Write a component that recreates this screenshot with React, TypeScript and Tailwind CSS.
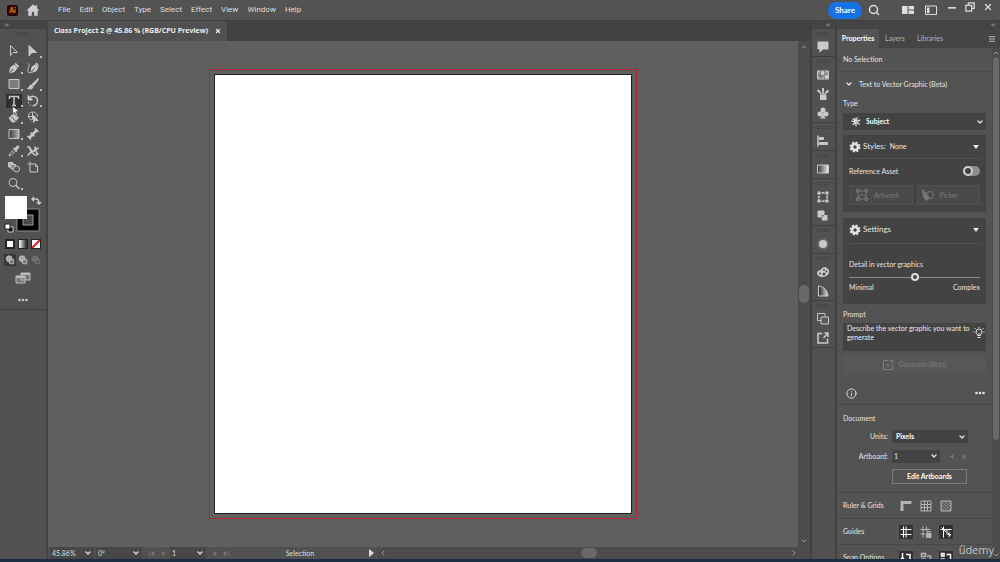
import React from "react";
import clsx from "clsx";
import {
  ChevronDown,
  ChevronLeft,
  ChevronRight,
  ChevronUp,
  Info,
  Menu,
  Search,
  X,
} from "lucide-react";

type IconProps = { children: React.ReactNode; size?: string };

const Icon: React.FC<IconProps> = ({ children, size = "size-3" }) => (
  <svg
    viewBox="0 0 24 24"
    className={clsx("shrink-0", size)}
    fill="none"
    stroke="currentColor"
    strokeWidth={2}
    aria-hidden="true"
  >
    {children}
  </svg>
);

const menus = [
  "File",
  "Edit",
  "Object",
  "Type",
  "Select",
  "Effect",
  "View",
  "Window",
  "Help",
];

const tools = [
  {
    name: "Selection",
    icon: <path d="M5 1v20l5-6h9L5 1Z" />,
  },
  {
    name: "Direct Selection",
    more: true,
    icon: <path d="M4 1v21l6-7h9L4 1Z" fill="currentColor" />,
  },
  {
    name: "Pen",
    more: true,
    icon: (
      <>
        <path d="M3 22 5 11l7-5 6 6-5 7-10 3Z" fill="currentColor" />
        <path d="m14 3 7 7" strokeWidth={4} />
        <path d="m3 22 7-8" stroke="#535353" />
      </>
    ),
  },
  {
    name: "Curvature",
    icon: (
      <>
        <path d="m8 21 2-11 7-5 5 6-4 7-10 3Z" fill="currentColor" />
        <path d="m18 2 5 6" strokeWidth={3} />
        <path d="m8 21 7-8" stroke="#535353" />
        <path d="M2 3c5 2 1 7 0 11s0 9 6 7" />
      </>
    ),
  },
  {
    name: "Rectangle",
    more: true,
    icon: <path d="M2 3h20v18H2z" fill="#7c7c7c" />,
  },
  {
    name: "Paintbrush",
    more: true,
    icon: (
      <>
        <path d="M22 1 10 13l3 3L23 3Z" fill="currentColor" />
        <path d="M8 14c-4 0-2 5-7 7 6 2 11 1 11-4Z" fill="currentColor" />
      </>
    ),
  },
  {
    name: "Type",
    more: true,
    active: true,
    icon: <path d="M3 8V3h18v5M12 3v18M8 21h8" strokeWidth={3} />,
  },
  {
    name: "Rotate",
    more: true,
    icon: (
      <>
        <path d="M5 6a9 9 0 0 1 16 6c0 6-5 10-10 9" strokeWidth={3} />
        <path d="M2 1v9h9Z" fill="currentColor" />
        <path d="M3 14v3M6 20l2 1" />
      </>
    ),
  },
  {
    name: "Eraser",
    more: true,
    icon: (
      <>
        <path d="m2 14 10-9 9 9-8 8H8Z" fill="currentColor" />
        <path d="m6 11 9 9" stroke="#535353" />
        <path d="M17 3v8" strokeWidth={3} />
      </>
    ),
  },
  {
    name: "Shape Builder",
    icon: (
      <>
        <path d="M10 18A8 8 0 0 1 3 8c2-6 9-8 14-4 3 2 4 5 4 8M3 11h14M11 3v14" />
        <path d="M13 9v14l3-4h6Z" fill="currentColor" />
      </>
    ),
  },
  {
    name: "Gradient",
    more: true,
    icon: <path d="M2 3h20v18H2z" fill="url(#toolGradient)" />,
  },
  {
    name: "Width",
    icon: (
      <>
        <path d="m4 20 16-16" strokeWidth={5} />
        <path d="m1 16 7 7M7 9l8 8M16 1l7 7" strokeWidth={3} />
      </>
    ),
  },
  {
    name: "Eyedropper",
    more: true,
    icon: (
      <>
        <path d="m13 8 4-5c4-3 6 0 4 3l-5 5Z" fill="currentColor" />
        <path d="m11 6 7 7" strokeWidth={3} />
        <path d="m12 9-8 8-2 5 5-2 8-8" />
      </>
    ),
  },
  {
    name: "Puppet Warp",
    icon: (
      <>
        <path d="M1 4c4-1 5 1 6 5s6 5 8 2 4-5 8-4" strokeWidth={4} />
        <path
          d="M1 21c4-1 3-6 7-6s5 5 9 5 3-3 6-3M7 9l2 6M17 3l-2 8M18 11l2 8"
          strokeWidth={3}
        />
      </>
    ),
  },
  {
    name: "Blend",
    icon: (
      <>
        <path d="M1 3h9v9H1z" fill="#b4b4b4" />
        <path d="M6 7h9v9H6z" fill="#858585" />
        <circle cx="17" cy="16" r="6" fill="#535353" />
      </>
    ),
  },
  {
    name: "Artboard",
    icon: <path d="M6 1v4M1 6h4M6 6h11l4 4v12H6V6ZM17 6v5h4" />,
  },
  {
    name: "Zoom",
    more: true,
    icon: (
      <>
        <circle cx="10" cy="9" r="8" />
        <path d="m16 15 7 7" strokeWidth={3} />
      </>
    ),
  },
];

const dockGroups = [
  [
    {
      name: "Comments",
      icon: <path d="M2 2h20v14H12l-6 6v-6H2Z" fill="currentColor" />,
    },
  ],
  [
    {
      name: "Swatches",
      icon: (
        <>
          <path d="M1 4h22v16H1z" fill="#9b9b9b" />
          <path d="M2 12h20M8 4v16M15 4v16" stroke="#666" />
          <path d="M9 6h5v5H9zM16 13h5v5h-5z" fill="currentColor" />
        </>
      ),
    },
    {
      name: "Brushes",
      icon: (
        <>
          <path d="M7 14h11v9H7z" fill="currentColor" />
          <path d="m9 13-5-6M12 13V3M15 13l5-6" strokeWidth={3} />
          <path d="m1 4 5 4M12 0v7M18 9l5-4" strokeWidth={4} />
        </>
      ),
    },
    {
      name: "Symbols",
      icon: (
        <g fill="currentColor" stroke="none">
          <circle cx="12" cy="6" r="5" />
          <circle cx="6" cy="14" r="5" />
          <circle cx="18" cy="14" r="5" />
          <path d="M11 10h2l1 8 4 5H6l4-5Z" />
        </g>
      ),
    },
  ],
  [
    {
      name: "Align",
      icon: (
        <>
          <path d="M2 1v22" strokeWidth={3} />
          <path d="M5 5h8v4H5zM5 15h16v4H5z" fill="currentColor" />
        </>
      ),
    },
  ],
  [
    {
      name: "Gradient",
      icon: <path d="M1 4h22v16H1z" fill="url(#panelGradient)" />,
    },
  ],
  [
    {
      name: "Transform",
      icon: (
        <>
          <path d="M4 4h16v16H4z" strokeDasharray="3 2" />
          <path
            d="M1 1h6v6H1zM17 1h6v6h-6zM1 17h6v6H1zM17 17h6v6h-6zM10 2h4v3h-4zM10 19h4v3h-4zM2 10h3v4H2zM19 10h3v4h-3z"
            fill="currentColor"
            stroke="none"
          />
        </>
      ),
    },
    {
      name: "Pathfinder",
      icon: (
        <>
          <path d="M2 2h12v12H2z" fill="currentColor" />
          <path d="M9 9h13v13H9z" fill="currentColor" stroke="#535353" />
          <path d="M9 9h5v5H9z" fill="#535353" />
        </>
      ),
    },
  ],
  [
    {
      name: "Appearance",
      icon: (
        <>
          <circle cx="12" cy="12" r="8" fill="currentColor" stroke="none" />
          <circle cx="12" cy="12" r="10" strokeDasharray="2 2" opacity={0.6} />
        </>
      ),
    },
  ],
  [
    {
      name: "Color",
      icon: (
        <>
          <path
            d="M1 13c1-5 8-3 9-7s12-4 13 4c1 8-6 11-13 11-5 0-10-3-9-8Z"
            fill="currentColor"
          />
          <g fill="#4a4a4a" stroke="none">
            <circle cx="14" cy="8" r="2" />
            <circle cx="19" cy="11" r="2" />
            <circle cx="6" cy="15" r="2" />
            <circle cx="14" cy="16" r="3" />
          </g>
        </>
      ),
    },
    {
      name: "Color Guide",
      icon: <path d="M3 22V2c11 1 18 9 19 20Z" fill="url(#guideGradient)" />,
    },
  ],
  [
    {
      name: "Artboards",
      icon: (
        <>
          <path d="M8 15H1V1h15v6" />
          <path d="M8 8h15v14H8z" fill="#5c5c5c" />
        </>
      ),
    },
    {
      name: "Asset Export",
      icon: (
        <path d="M11 3H2v19h19v-9M13 12l9-10M15 2h7v8" strokeWidth={3} />
      ),
    },
  ],
];

const rulerIcons = [
  { name: "Rulers", icon: <path d="M4 22V5h19" strokeWidth={6} /> },
  {
    name: "Grid",
    icon: <path d="M2 2h20v20H2zM2 9h20M2 15h20M9 2v20M15 2v20" />,
  },
  {
    name: "Transparency grid",
    icon: (
      <>
        <path d="M2 2h20v20H2z" />
        <path
          d="m2 8 6-6M2 15 15 2M2 22 22 2M9 22 22 9M16 22l6-6M2 16l6 6M2 9l13 13M2 2l20 20M9 2l13 13M16 2l6 6"
          strokeWidth={1}
        />
      </>
    ),
  },
];

const guideIcons = [
  {
    name: "Show guides",
    active: true,
    icon: <path d="M7 1v22M1 7h22M1 17h22M12 1v22" />,
  },
  {
    name: "Lock guides",
    icon: (
      <>
        <path d="M6 1v22M13 1v10M1 7h20M1 16h10" />
        <path d="M13 15h9v8h-9z" fill="currentColor" />
        <path d="M15 15v-4h5v4" />
      </>
    ),
  },
  {
    name: "Smart guides",
    active: true,
    icon: (
      <>
        <path d="M7 1v22M1 7h22M14 7v9M3 3l9 9" />
        <path d="m19 11-5 7h4l-1 6 6-8h-4Z" fill="currentColor" stroke="none" />
      </>
    ),
  },
];

const snapIcons = [
  {
    name: "Snap to point",
    active: true,
    icon: <path d="M5 2v20M2 12l3 3 3-3M12 5h8v17" strokeWidth={3} />,
  },
  {
    name: "Snap to pixel",
    icon: <path d="M3 3h8v6H3zM3 14h8M14 8h7v14" strokeWidth={3} />,
  },
  {
    name: "Snap to glyph",
    active: true,
    icon: <path d="M3 3h5v5H3zM3 14h5v5H3zM13 5h8v12h-8" strokeWidth={3} />,
  },
];

const Gradients = () => (
  <svg className="absolute size-0" aria-hidden="true">
    <defs>
      <linearGradient id="toolGradient">
        <stop offset="0" stopColor="#3a3a3a" />
        <stop offset="1" stopColor="#b4b4b4" />
      </linearGradient>
      <linearGradient id="panelGradient">
        <stop offset="0" stopColor="#333" />
        <stop offset="1" stopColor="#eee" />
      </linearGradient>
      <linearGradient id="guideGradient">
        <stop offset="0" stopColor="#222" />
        <stop offset="1" stopColor="#ddd" />
      </linearGradient>
    </defs>
  </svg>
);

const Collapse: React.FC<{ back?: boolean }> = ({ back }) => (
  <svg viewBox="0 0 8 6" className="w-1.5 h-1" fill="none" stroke="#c4c4c4">
    <path d={back ? "M4 1 2 3l2 2M7 1 5 3l2 2" : "m1 1 2 2-2 2M4 1l2 2-2 2"} />
  </svg>
);

const Grip = () => (
  <div className="w-3 h-[3px] border-y border-dotted border-[#3c3c3c]" />
);

const Dots = () => (
  <svg viewBox="0 0 12 4" className="w-3 h-1" fill="currentColor">
    <circle cx="2.5" cy="2" r="1.3" />
    <circle cx="6" cy="2" r="1.3" />
    <circle cx="9.5" cy="2" r="1.3" />
  </svg>
);

const GearIcon = () => (
  <Icon>
    <circle cx="12" cy="12" r="6" strokeWidth={5} />
    <circle cx="12" cy="12" r="9" strokeWidth={4} strokeDasharray="4 3.07" />
  </Icon>
);

const TopBar = () => (
  <header className="flex items-center h-[21px] shrink-0 border-b border-[#414141] bg-[#535353] text-[#dedede]">
    <div className="flex items-center gap-2 w-12 pl-[7px]">
      <span className="flex items-center justify-center size-[11px] rounded-xs bg-[#2d0500] font-bold text-[7px] text-[#ff7c1a]">
        Ai
      </span>
      <button aria-label="Home" className="text-[#d0d0d0]">
        <svg viewBox="0 0 24 24" className="size-[14px]" fill="currentColor">
          <path d="M12 2 1 13h3v9h6v-7h4v7h6v-9h3l-4-4V4h-3v2Z" />
        </svg>
      </button>
    </div>
    <nav className="flex items-center gap-[9px] pl-[10px] font-['Roboto',sans-serif] text-[8px]">
      {menus.map((item) => (
        <button key={item}>{item}</button>
      ))}
    </nav>
    <div className="flex items-center ml-auto pr-[7px]">
      <button className="h-[17px] px-[7px] mr-1.5 rounded-full bg-[#1473e6] font-bold text-[8px] text-white">
        Share
      </button>
      <button aria-label="Search" className="mr-[22px]">
        <Search className="size-3" strokeWidth={3} />
      </button>
      <button aria-label="Arrange documents" className="mr-[11px]">
        <Icon>
          <path
            d="M0 4h11v16H0zM13 4h11v7H13zM13 13h11v7H13z"
            fill="currentColor"
            stroke="none"
          />
        </Icon>
      </button>
      <button aria-label="Switch workspace" className="mr-[10px]">
        <Icon>
          <path d="M1 4h22v17H1z" />
          <path d="M4 7h5v11H4z" fill="currentColor" stroke="none" />
        </Icon>
      </button>
      <div className="flex items-center gap-2 pb-1.5">
        <button aria-label="Minimize">
          <Icon size="size-[10px]">
            <path d="M3 14h18" strokeWidth={4} />
          </Icon>
        </button>
        <button aria-label="Restore">
          <Icon size="size-[10px]">
            <path d="M8 8V2h14v13h-6M2 8h14v14H2z" strokeWidth={3} />
          </Icon>
        </button>
        <button aria-label="Close">
          <X className="size-[10px]" strokeWidth={3} />
        </button>
      </div>
    </div>
  </header>
);

const Toolbar = () => (
  <aside className="flex flex-col w-12 shrink-0 border-r-2 border-[#434343] bg-[#515151] text-[#c8c8c8]">
    <div className="flex items-center h-2 pl-1 bg-[#444]">
      <Collapse />
    </div>
    <div className="flex flex-col border-b border-[#404040] pb-[7px]">
      <div className="flex justify-center pt-[3px] pb-2">
        <Grip />
      </div>
      <div className="grid grid-cols-2 grid-rows-9 h-[149px] px-1">
        {tools.map((tool) => (
          <button
            key={tool.name}
            aria-label={`${tool.name} Tool`}
            className="relative flex items-center justify-center"
          >
            <span
              className={clsx(
                "flex items-center justify-center w-4 h-3.5",
                tool.active && "bg-[#303030]"
              )}
            >
              <Icon>{tool.icon}</Icon>
            </span>
            {tool.more && (
              <span className="absolute right-0 bottom-0.5 size-0.5 bg-[#bbb]" />
            )}
            {tool.active && (
              <svg
                viewBox="0 0 12 16"
                className="absolute left-2 top-3 z-10 w-2 h-3"
                fill="#fff"
                stroke="#333"
              >
                <path d="M1 1v12l3-3 2 5 2-1-2-5h5Z" />
              </svg>
            )}
          </button>
        ))}
      </div>
      <div className="flex justify-center pt-0.5">
        <svg viewBox="0 0 38 42" className="w-[38px] h-[42px]">
          <path d="M13 15h22v22H13z" fill="#000" stroke="#8c8c8c" />
          <path d="M19 21h10v10H19z" fill="#4b4b4b" stroke="#9b9b9b" />
          <path d="M1 2h22v23H1z" fill="#fff" />
          <path
            d="M29 5h3q3 0 3 4"
            fill="none"
            stroke="#c8c8c8"
            strokeWidth="1.5"
          />
          <path d="m30 2-3 3 3 3ZM32 8h6l-3 3Z" fill="#c8c8c8" />
          <path d="M4 33h5v5H4z" fill="#111" stroke="#ccc" />
          <path d="M1 30h5v5H1z" fill="#fff" stroke="#222" />
        </svg>
      </div>
      <div className="flex justify-center gap-[3px] pt-[3px] pr-px">
        <button
          aria-label="Color"
          className="size-[10px] border-2 border-[#252525] bg-white"
        />
        <button
          aria-label="Gradient"
          className="size-[10px] border border-[#252525] bg-linear-to-r from-white to-[#222]"
        />
        <button
          aria-label="None"
          className="size-[10px] border border-[#252525] bg-white"
        >
          <svg
            viewBox="0 0 8 8"
            className="size-2"
            stroke="#d61f2c"
            strokeWidth="2"
          >
            <path d="M0 8 8 0" />
          </svg>
        </button>
      </div>
      <div className="flex justify-center gap-px pt-[5px] pr-px">
        {["Draw Normal", "Draw Behind", "Draw Inside"].map((mode, i) => (
          <button
            key={mode}
            aria-label={mode}
            className={clsx(
              "flex items-center justify-center size-3",
              i === 0 && "bg-[#373737]",
              i === 2 && "opacity-30"
            )}
          >
            <Icon size="size-[10px]">
              <circle cx="10" cy="9" r="7" fill="#a8a8a8" />
              <path d="M11 11h10v10H11z" fill="#777" />
            </Icon>
          </button>
        ))}
      </div>
      <button aria-label="Change Screen Mode" className="self-center mt-1.5">
        <svg
          viewBox="0 0 16 12"
          className="w-4 h-3"
          fill="#777"
          stroke="#bbb"
        >
          <path d="M6 1h9v7H6zM1 4h9v7H1z" />
          <path d="M6 2h9M1 5h9" strokeWidth="2" />
        </svg>
      </button>
      <button aria-label="Edit Toolbar" className="self-center mt-3.5">
        <Dots />
      </button>
    </div>
  </aside>
);

const StatusSelect: React.FC<{
  label: string;
  value: string;
  className: string;
}> = ({ label, value, className }) => (
  <div
    className={clsx("relative flex items-center h-full bg-[#474747]", className)}
  >
    <select
      aria-label={label}
      className="w-full appearance-none pl-0.5 leading-3 outline-none"
    >
      <option>{value}</option>
    </select>
    <ChevronDown
      className="absolute right-0.5 size-2 pointer-events-none"
      strokeWidth={4}
    />
  </div>
);

const StepIcon: React.FC<{ back?: boolean; end?: boolean }> = ({
  back,
  end,
}) => (
  <svg
    viewBox="0 0 8 8"
    className={clsx("size-[7px]", back && "rotate-180")}
    fill="#777"
    stroke="none"
  >
    <path d={end ? "M1 1v6l4-3ZM6 1h1v6H6z" : "M2 1v6l4-3Z"} />
  </svg>
);

const Workspace = () => (
  <main className="flex flex-col flex-1 min-w-0">
    <div className="flex h-5 shrink-0 bg-[#424242]">
      <div className="flex items-center gap-[7px] px-1.5 bg-[#515151] font-['Open_Sans',sans-serif] font-bold text-[7px] text-[#ececec]">
        <span>Class Project 2 @ 45.86 % (RGB/CPU Preview)</span>
        <button aria-label="Close document">
          <X className="size-1.5" strokeWidth={5} />
        </button>
      </div>
    </div>
    <div className="flex flex-1 min-h-0">
      <div className="flex flex-1 justify-center py-7 bg-[#5f5f5f]">
        <div className="h-full aspect-[428/450] border border-[#b0243a] p-1">
          <div className="size-full border border-[#222] bg-white" />
        </div>
      </div>
      <div className="flex flex-col items-center justify-between w-3 py-0.5 bg-[#4b4b4b] text-[#9a9a9a]">
        <ChevronUp className="size-2" strokeWidth={3} />
        <div className="w-[10px] h-[18px] rounded-full bg-[#696969]" />
        <ChevronDown className="size-2" strokeWidth={3} />
      </div>
    </div>
    <div className="flex items-center h-3 shrink-0 bg-[#515151] pl-0.5 text-[7px] text-[#dedede]">
      <StatusSelect label="Zoom" value="45.86%" className="w-11" />
      <StatusSelect
        label="Rotate view"
        value="0°"
        className="w-[46px] ml-0.5"
      />
      <div className="flex gap-1 pl-1.5 pr-1">
        <StepIcon back end />
        <StepIcon back />
      </div>
      <StatusSelect label="Artboard number" value="1" className="w-9" />
      <div className="flex gap-1 px-1.5">
        <StepIcon />
        <StepIcon end />
      </div>
      <span className="w-32 text-center">Selection</span>
      <svg viewBox="0 0 8 8" className="size-2 ml-[3px]" fill="#ddd">
        <path d="M2 0v8l5-4Z" />
      </svg>
      <div className="flex flex-1 items-center justify-between h-full pl-0.5 pr-3 ml-0.5 bg-[#4b4b4b] text-[#9a9a9a]">
        <ChevronLeft className="size-2" strokeWidth={3} />
        <div className="w-4 h-[10px] rounded-full bg-[#696969]" />
        <ChevronRight className="size-2" strokeWidth={3} />
      </div>
    </div>
  </main>
);

const IconDock = () => (
  <aside className="flex flex-col w-[27px] shrink-0 border-x-2 border-[#414141] bg-[#515151] text-[#cacaca]">
    <div className="flex items-center justify-end h-2 pr-1 bg-[#444]">
      <Collapse back />
    </div>
    {dockGroups.map((group, i) => (
      <div
        key={i}
        className="flex flex-col items-center border-b border-[#404040] pr-px"
      >
        <div className="flex items-center h-2">
          <Grip />
        </div>
        {group.map((item) => (
          <button
            key={item.name}
            aria-label={item.name}
            className="flex items-center justify-center h-[19px]"
          >
            <Icon>{item.icon}</Icon>
          </button>
        ))}
      </div>
    ))}
  </aside>
);

type ToggleItem = { name: string; icon: React.ReactNode; active?: boolean };

const ToggleRow: React.FC<{ label: string; items: ToggleItem[] }> = ({
  label,
  items,
}) => (
  <div className="flex items-center h-[26px] shrink-0 border-t border-[#484848] pl-1.5">
    <span className="w-[56px]">{label}</span>
    <div className="flex gap-1.5">
      {items.map((item) => (
        <button
          key={item.name}
          aria-label={item.name}
          className={clsx(
            "flex items-center justify-center size-3.5",
            item.active ? "bg-[#303030] text-white" : "text-[#b4b4b4]"
          )}
        >
          <Icon>{item.icon}</Icon>
        </button>
      ))}
    </div>
  </div>
);

const PropertiesPanel = () => (
  <aside className="flex flex-col w-[163px] shrink-0 bg-[#535353] text-[7px] leading-[9px] text-[#e4e4e4]">
    <div className="flex items-center justify-end h-2 shrink-0 pr-1 bg-[#444]">
      <Collapse back />
    </div>
    <div className="flex items-stretch h-[19px] shrink-0 bg-[#454545] text-[#b4b4b4]">
      <button className="w-[42px] bg-[#535353] font-bold text-white">
        Properties
      </button>
      <button className="w-8">Layers</button>
      <button className="w-[38px]">Libraries</button>
      <button aria-label="Panel menu" className="ml-auto pr-1">
        <Menu className="size-2" strokeWidth={3} />
      </button>
    </div>
    <div className="flex flex-1 min-h-0">
      <div className="flex flex-col flex-1 min-w-0 overflow-hidden">
        <div className="flex items-center h-6 shrink-0 border-b border-[#4b4b4b] pl-1.5">
          No Selection
        </div>
        <div className="flex flex-col px-1.5 shrink-0">
          <button className="flex items-center gap-1.5 h-6 pl-0.5">
            <ChevronDown className="size-2" strokeWidth={4} />
            Text to Vector Graphic (Beta)
          </button>
          <label htmlFor="type" className="pt-[3px] pb-[5px]">
            Type
          </label>
          <div className="relative flex items-center h-[17px] bg-[#434343]">
            <span className="absolute left-2 pointer-events-none">
              <Icon size="size-[10px]">
                <path
                  d="m9 2 3 9M15 1l-2 9M22 7l-8 4M21 18l-8-6M12 22v-9M4 19l7-7M1 10l10 2M4 4l7 7"
                  strokeWidth={3}
                />
              </Icon>
            </span>
            <select
              id="type"
              className="w-full h-full appearance-none pl-[23px] font-bold text-white outline-none"
            >
              <option>Subject</option>
              <option>Scene</option>
              <option>Icon</option>
            </select>
            <ChevronDown
              className="absolute right-0.5 size-2 pointer-events-none"
              strokeWidth={4}
            />
          </div>

          <section className="flex flex-col h-[77px] mt-[5px] px-1.5 bg-[#434343]">
            <button className="flex items-center h-6 border-b border-[#505050]">
              <GearIcon />
              <span className="pl-0.5 text-[8px]">Styles:</span>
              <span className="pl-1">None</span>
              <svg
                viewBox="0 0 8 8"
                className="size-2 ml-auto"
                fill="currentColor"
              >
                <path d="M1 2h6L4 6Z" />
              </svg>
            </button>
            <label className="flex items-center justify-between h-6">
              Reference Asset
              <input type="checkbox" role="switch" className="peer sr-only" />
              <span className="flex w-[17px] h-[10px] rounded-full bg-[#8c8c8c]">
                <span className="size-[10px] rounded-full border-2 border-[#cfcfcf] bg-[#434343]" />
              </span>
            </label>
            <div className="grid grid-cols-2 gap-1 pt-0.5 text-[#777]">
              <button
                disabled
                className="flex items-center gap-1.5 h-5 pl-1.5 border border-[#505050] bg-[#4a4a4a]"
              >
                <Icon>
                  <path d="M4 4h16v16H4zM1 1h5v5H1zM18 1h5v5h-5zM1 18h5v5H1zM18 18h5v5h-5zM5 18l6-9 4 5 2-2 3 6" />
                </Icon>
                Artwork
              </button>
              <button
                disabled
                className="flex items-center gap-1.5 h-5 pl-1 border border-[#505050] bg-[#4a4a4a]"
              >
                <Icon>
                  <circle cx="16" cy="12" r="7" />
                  <path
                    d="m2 1 3 6 3 1 1 4 5 3-1 5-4 3-5-5-2-9-1-4Z"
                    fill="currentColor"
                  />
                </Icon>
                Picker
              </button>
            </div>
          </section>

          <section className="flex flex-col h-[86px] mt-1.5 px-1.5 bg-[#434343]">
            <button className="flex items-center h-[23px] shrink-0">
              <GearIcon />
              <span className="pl-0.5 text-[8px]">Settings</span>
              <svg
                viewBox="0 0 8 8"
                className="size-2 ml-auto"
                fill="currentColor"
              >
                <path d="M1 2h6L4 6Z" />
              </svg>
            </button>
            <label
              htmlFor="detail"
              className="mt-0.5 pt-4 border-t border-[#505050]"
            >
              Detail in vector graphics
            </label>
            <input
              id="detail"
              type="range"
              min="0"
              max="100"
              defaultValue="50"
              className="appearance-none w-full h-2 mt-1 mb-0.5 bg-transparent [&::-webkit-slider-runnable-track]:h-px [&::-webkit-slider-runnable-track]:bg-[#8c8c8c] [&::-webkit-slider-thumb]:appearance-none [&::-webkit-slider-thumb]:size-2 [&::-webkit-slider-thumb]:-mt-1 [&::-webkit-slider-thumb]:rounded-full [&::-webkit-slider-thumb]:border-2 [&::-webkit-slider-thumb]:border-[#dcdcdc] [&::-webkit-slider-thumb]:bg-[#434343]"
            />
            <div className="flex justify-between">
              <span>Minimal</span>
              <span>Complex</span>
            </div>
          </section>

          <label htmlFor="prompt" className="pt-1.5 pb-1">
            Prompt
          </label>
          <div className="relative flex">
            <textarea
              id="prompt"
              placeholder="Describe the vector graphic you want to generate"
              className="w-full h-7 resize-none bg-[#434343] py-px pl-1 pr-4 outline-none placeholder:text-[#ececec]"
            />
            <button
              aria-label="Prompt ideas"
              className="absolute right-px top-1"
            >
              <Icon>
                <path d="M9 17c0-3-3-4-3-7a6 6 0 0 1 12 0c0 3-3 4-3 7H9ZM9 21h6M12 0v2M1 10h2M21 10h2M3 2l2 2M21 2l-2 2M12 17v-5" />
              </Icon>
            </button>
          </div>
          <button
            disabled
            className="flex items-center justify-center gap-1 h-[19px] mt-1 bg-[#575757] text-[#7c7c7c]"
          >
            <Icon>
              <path d="M13 3H3v18h18V11M12 9v6M9 12h6M19 1v7M16 4h7" />
            </Icon>
            Generate (Beta)
          </button>
          <div className="flex items-center justify-between h-[30px] pt-2 pl-[3px]">
            <button aria-label="About this feature">
              <Info className="size-[11px]" strokeWidth={2} />
            </button>
            <button aria-label="More options">
              <Dots />
            </button>
          </div>
        </div>

        <section className="flex flex-col shrink-0 h-[88px] px-1.5 border-t border-[#484848]">
          <h3 className="pt-[9px] pb-1">Document</h3>
          <div className="flex items-center h-[19px]">
            <label htmlFor="units" className="w-[45px] text-right">
              Units:
            </label>
            <div className="relative flex items-center w-[76px] ml-1 bg-[#434343]">
              <select
                id="units"
                className="w-full h-[13px] appearance-none pl-1 font-bold text-white outline-none"
              >
                <option>Pixels</option>
                <option>Points</option>
              </select>
              <ChevronDown
                className="absolute right-0.5 size-2 pointer-events-none"
                strokeWidth={4}
              />
            </div>
          </div>
          <div className="flex items-center h-[20px]">
            <label htmlFor="artboard" className="w-[45px] text-right">
              Artboard:
            </label>
            <div className="relative flex items-center w-12 ml-1 bg-[#434343]">
              <select
                id="artboard"
                className="w-full h-[13px] appearance-none pl-0.5 outline-none"
              >
                <option>1</option>
              </select>
              <ChevronDown
                className="absolute right-0.5 size-2 pointer-events-none"
                strokeWidth={4}
              />
            </div>
            <div className="flex gap-1.5 pl-2">
              <StepIcon back />
              <StepIcon />
            </div>
          </div>
          <button className="w-[75px] h-[15px] mt-[3px] ml-[49px] shrink-0 border border-[#7a7a7a] font-bold text-white">
            Edit Artboards
          </button>
        </section>
        <ToggleRow label="Ruler & Grids" items={rulerIcons} />
        <ToggleRow label="Guides" items={guideIcons} />
        <ToggleRow label="Snap Options" items={snapIcons} />
      </div>
      <div className="flex flex-col items-center w-2 pt-px bg-[#4b4b4b] text-[#9a9a9a]">
        <ChevronUp className="size-2" strokeWidth={3} />
        <div className="w-1.5 h-3/4 rounded-full bg-[#696969]" />
        <ChevronDown className="size-2 mt-auto" strokeWidth={3} />
      </div>
    </div>
  </aside>
);

export default function App() {
  return (
    <div className="relative flex flex-col h-screen overflow-hidden bg-[#535353] font-['Lato',sans-serif] text-[#dcdcdc]">
      <Gradients />
      <TopBar />
      <div className="flex flex-1 min-h-0">
        <Toolbar />
        <Workspace />
        <IconDock />
        <PropertiesPanel />
      </div>
      <div className="h-[3px] shrink-0 bg-[#1c2c42]" />
      <div className="absolute right-1.5 bottom-1.5 flex items-center font-['Open_Sans',sans-serif] text-[11px] leading-3 text-[#c4c4c4]">
        <svg
          viewBox="0 0 8 4"
          className="absolute left-0 top-0 w-[7px] h-1"
          fill="none"
          stroke="currentColor"
        >
          <path d="m1 3 3-2 3 2" />
        </svg>
        udemy
      </div>
    </div>
  );
}
